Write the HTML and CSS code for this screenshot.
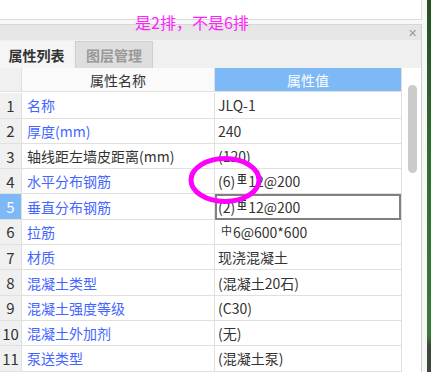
FILE: index.html
```html
<html lang="zh-CN">
<head>
    <meta charset="UTF-8">
    <meta name="viewport" content="width=device-width, initial-scale=1.0">
    <title>属性列表</title>
    <link rel="stylesheet" href="styles.css">
</head>
<body>
    <div class="screen">
        <div class="main">
            <div class="top-box"></div>
            <div class="panel">
                <div class="title-bar"><span class="close">&#x2715;</span></div>
                <div class="tabs">
                    <div class="tab active">属性列表</div>
                    <div class="tab">图层管理</div>
                </div>
                <div class="table-area">
                    <div class="grid">
                        <div class="cell num head"></div>
                        <div class="cell name head">属性名称</div>
                        <div class="cell value head">属性值</div>

                        <div class="cell num">1</div>
                        <div class="cell name link">名称</div>
                        <div class="cell value">JLQ-1</div>

                        <div class="cell num">2</div>
                        <div class="cell name link">厚度(mm)</div>
                        <div class="cell value">240</div>

                        <div class="cell num">3</div>
                        <div class="cell name">轴线距左墙皮距离(mm)</div>
                        <div class="cell value">(120)</div>

                        <div class="cell num">4</div>
                        <div class="cell name link">水平分布钢筋</div>
                        <div class="cell value">(6)<svg class="bar3" width="10" height="12" viewBox="0 0 10 12"><path d="M1 1.5H9M2 3.5H8V7.5H2ZM5 1.5V10.5M0.5 10.5H9.5" fill="none" stroke="#333" stroke-width="1.2"/></svg>12@200</div>

                        <div class="cell num selected">5</div>
                        <div class="cell name link">垂直分布钢筋</div>
                        <div class="cell value editing">(2)<svg class="bar3" width="10" height="12" viewBox="0 0 10 12"><path d="M1 1.5H9M2 3.5H8V7.5H2ZM5 1.5V10.5M0.5 10.5H9.5" fill="none" stroke="#333" stroke-width="1.2"/></svg>12@200</div>

                        <div class="cell num">6</div>
                        <div class="cell name link">拉筋</div>
                        <div class="cell value"><span class="bar1">中</span>6@600*600</div>

                        <div class="cell num">7</div>
                        <div class="cell name link">材质</div>
                        <div class="cell value">现浇混凝土</div>

                        <div class="cell num">8</div>
                        <div class="cell name link">混凝土类型</div>
                        <div class="cell value">(混凝土20石)</div>

                        <div class="cell num">9</div>
                        <div class="cell name link">混凝土强度等级</div>
                        <div class="cell value">(C30)</div>

                        <div class="cell num">10</div>
                        <div class="cell name link">混凝土外加剂</div>
                        <div class="cell value">(无)</div>

                        <div class="cell num">11</div>
                        <div class="cell name link">泵送类型</div>
                        <div class="cell value">(混凝土泵)</div>
                    </div>
                    <div class="scroll">
                        <div class="thumb"></div>
                    </div>
                </div>
            </div>
        </div>
        <div class="side"></div>
    </div>

    <div class="note">是2排，不是6排</div>
    <svg class="ring" width="80" height="54" viewBox="0 0 80 54">
        <ellipse cx="40" cy="27" rx="34" ry="21.5" fill="none" stroke="#f0f" stroke-width="5"/>
    </svg>
</body>
</html>
```

FILE: styles.css
```css
body {
    margin: 0;
    width: 431px;
    height: 372px;
    overflow: hidden;
    font-family: "Noto Sans CJK SC", "Noto Sans", sans-serif;
    font-size: 14px;
    color: #333;
    background-color: #f0f0f0;
    position: relative;
}

.screen {
    display: flex;
    height: 372px;
}

.main {
    width: 427px;
    display: flex;
    flex-direction: column;
    background-color: #f7f7f7;
}

.top-box {
    height: 20px;
    width: 422px;
    background-color: #fff;
    border-bottom: 1px solid #dcdcdc;
    border-right: 1px solid #dcdcdc;
    box-sizing: border-box;
}

.panel {
    margin-top: 4px;
    width: 422px;
    border-right: 1px solid #d0d0d0;
    border-top: 1px solid #d6d6d6;
    box-sizing: border-box;
    flex: 1;
    background-color: #fff;
}

.title-bar {
    height: 15px;
    background-color: #e6e6e6;
    display: flex;
    justify-content: flex-end;
    align-items: center;
    padding-right: 4px;
}

.close {
    color: #9a9a9a;
    font-size: 11px;
    line-height: 1;
}

.tabs {
    height: 28px;
    background-color: #f0f0f0;
    display: flex;
    align-items: flex-end;
    gap: 2px;
}

.tab {
    height: 27px;
    width: 78px;
    display: flex;
    align-items: center;
    justify-content: center;
    font-weight: bold;
    color: #999;
    background-color: #dedede;
    border: 1px solid #cfcfcf;
    border-bottom: none;
    box-sizing: border-box;
}

.tab.active {
    width: 73px;
    color: #333;
    background-color: #f5f5f5;
    border: none;
}

.table-area {
    display: flex;
}

.grid {
    width: 401px;
    display: grid;
    grid-template-columns: 22px 193px 186px;
    grid-auto-rows: 25.3px;
    border-right: 1px solid #e0e0e0;
}

.cell {
    display: flex;
    align-items: center;
    border-bottom: 1px solid #e0e0e0;
    border-right: 1px solid #e0e0e0;
    box-sizing: border-box;
    white-space: nowrap;
    overflow: hidden;
}

.head {
    height: 24px;
}

.num {
    justify-content: center;
    background-color: #f0f0f0;
    font-size: 15px;
}

.num.selected {
    background-color: #7db9f6;
    color: #fff;
}

.name {
    padding-left: 5px;
}

.name.head {
    justify-content: center;
    padding-left: 0;
    background-color: #fafafa;
}

.link {
    color: #4466ff;
}

.value {
    padding-left: 3px;
    border-right: none;
}

.value.head {
    justify-content: center;
    background-color: #7db9f6;
    color: #fff;
    padding-left: 0;
}

.value.editing {
    border: 2px solid #808080;
    padding-left: 1px;
}

.bar3 {
    margin: -5px 1px 0 2px;
}

.bar1 {
    font-size: 11px;
    margin: -4px 1px 0 3px;
}

.scroll {
    flex: 1;
    background-color: #fff;
    padding: 17px 4px 0 6px;
}

.thumb {
    width: 9px;
    height: 88px;
    border-radius: 5px;
    background-color: #cbcbcb;
}

.side {
    width: 4px;
    background: linear-gradient(#234f23, #2f6d2f 40%, #3b7a3b 90%, #3a4a3a 93%);
}

.note {
    position: absolute;
    left: 135px;
    top: 12px;
    font-size: 16px;
    line-height: 20px;
    color: #ff1fff;
}

.ring {
    position: absolute;
    left: 185px;
    top: 153px;
}
```
